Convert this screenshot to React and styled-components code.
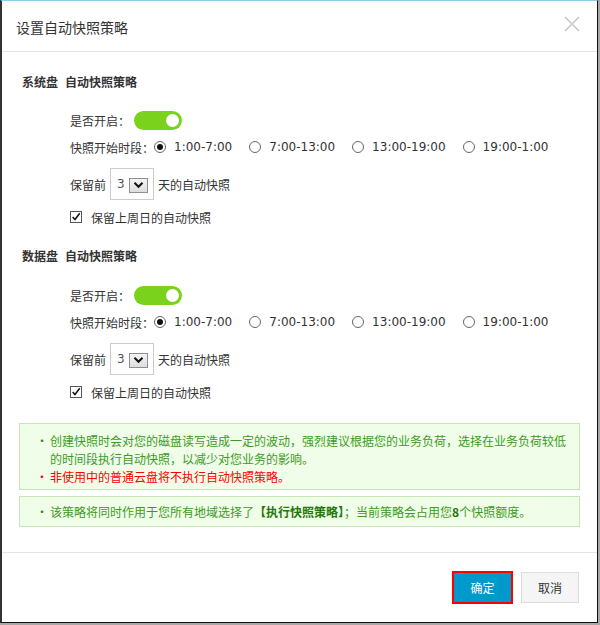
import React from 'react';
import styled, { createGlobalStyle } from 'styled-components';

const GlobalStyle = createGlobalStyle`
  html, body {
    margin: 0;
    padding: 0;
    background: #a8a8a8;
  }
  body {
    font-family: "DejaVu Sans", "Noto Sans CJK SC", sans-serif;
    font-size: 12px;
    color: #333;
  }
  * {
    box-sizing: border-box;
  }
`;

const Frame = styled.div`
  width: 598px;
  height: 623px;
  background: #fff;
  border-top: 1px solid #8ccbea;
  border-left: 2px solid #333;
  border-right: 1px solid #111;
  border-bottom: 1px solid #111;
  display: flex;
  flex-direction: column;
`;

const Header = styled.div`
  height: 51px;
  flex: 0 0 51px;
  display: flex;
  align-items: center;
  justify-content: space-between;
  padding: 0 17px 0 14px;
  border-bottom: 1px solid #e5e5e5;
`;

const Title = styled.div`
  font-family: "Noto Sans CJK SC", sans-serif;
  font-size: 14px;
  color: #333;
  margin-top: 1px;
`;

const Close = styled.div`
  width: 16px;
  height: 16px;
  margin-top: -4px;
  display: flex;
`;

const Body = styled.div`
  padding: 20px 17px 0 17px;
  display: flex;
  flex-direction: column;
`;

const SectionTitle = styled.div`
  height: 20px;
  line-height: 20px;
  padding-left: 3px;
  font-weight: bold;
  font-family: "Noto Sans CJK SC", sans-serif;
  margin-top: ${({ $first }) => ($first ? '0' : '19px')};
  span {
    margin-right: 7px;
  }
`;

const Form = styled.div`
  margin-left: 51px;
  display: flex;
  flex-direction: column;
`;

const Row = styled.div`
  display: flex;
  align-items: center;
  height: ${({ $h }) => $h || 20}px;
  margin-top: ${({ $mt }) => $mt}px;
`;

const Label = styled.span`
  font-family: "Noto Sans CJK SC", sans-serif;
  white-space: nowrap;
`;

const Toggle = styled.div`
  width: 48px;
  height: 19px;
  margin-left: 4px;
  border-radius: 10px;
  background: #7bd21c;
  display: flex;
  align-items: center;
  justify-content: flex-end;
  padding-right: 3px;
`;

const Knob = styled.div`
  width: 13px;
  height: 13px;
  border-radius: 50%;
  background: #fff;
`;

const RadioOption = styled.label`
  display: flex;
  align-items: center;
  margin-right: 17px;
`;

const RadioCircle = styled.span`
  width: 12px;
  height: 12px;
  border-radius: 50%;
  border: 1px solid #666;
  background: #fff;
  display: flex;
  align-items: center;
  justify-content: center;
  margin-right: 8px;
  &::after {
    content: '';
    width: 6px;
    height: 6px;
    border-radius: 50%;
    background: ${({ $checked }) => ($checked ? '#111' : 'transparent')};
  }
`;

const RadioText = styled.span`
  font-family: "DejaVu Sans", sans-serif;
  color: #333;
`;

const SelectBox = styled.div`
  width: 44px;
  height: 32px;
  margin: 0 4px;
  border: 1px solid #ccc;
  display: flex;
  align-items: center;
  padding-left: 6px;
  font-family: "DejaVu Sans", sans-serif;
  color: #555;
`;

const SelectArrow = styled.div`
  width: 19px;
  height: 15px;
  margin-left: 4px;
  margin-top: 2px;
  border: 1px solid #8f8f8f;
  background: linear-gradient(#f4f4f4, #dedede);
  display: flex;
  align-items: center;
  justify-content: center;
`;

const CheckBox = styled.span`
  width: 12px;
  height: 12px;
  border: 1px solid #555;
  background: #fff;
  margin-right: 9px;
  display: flex;
  align-items: center;
  justify-content: center;
`;

const Tip = styled.ul`
  list-style: none;
  margin: ${({ $mt }) => $mt}px 0 0 0;
  padding: ${({ $pad }) => $pad};
  padding-left: 16px;
  padding-right: 4px;
  border: 1px solid #c6e6b6;
  background: #f0fde9;
  font-family: "Noto Sans CJK SC", sans-serif;
`;

const TipItem = styled.li`
  display: flex;
  line-height: 18px;
  color: ${({ $red }) => ($red ? '#ff0000' : '#3d9b1f')};
  b {
    color: #23780a;
  }
`;

const Bullet = styled.span`
  flex: 0 0 14px;
  font-size: 12px;
  color: ${({ $red }) => ($red ? '#ff0000' : '#2f8a14')};
`;

const Footer = styled.div`
  margin-top: auto;
  border-top: 1px solid #e5e5e5;
  height: 70px;
  flex: 0 0 70px;
  display: flex;
  align-items: center;
  justify-content: flex-end;
  gap: 8px;
  padding: 0 18px 0 0;
`;

const Button = styled.button`
  font-family: "Noto Sans CJK SC", sans-serif;
  font-size: 12px;
  cursor: pointer;
  padding: 0;
  width: ${({ $primary }) => ($primary ? '61px' : '58px')};
  height: ${({ $primary }) => ($primary ? '33px' : '31px')};
  color: ${({ $primary }) => ($primary ? '#fff' : '#333')};
  background: ${({ $primary }) => ($primary ? '#0099cc' : '#f5f5f5')};
  border: ${({ $primary }) => ($primary ? '2px solid #ff0000' : '1px solid #dcdcdc')};
`;

const times = ['1:00-7:00', '7:00-13:00', '13:00-19:00', '19:00-1:00'];

const Chevron = () => (
  <svg width="11" height="8" viewBox="0 0 11 8">
    <path d="M1.5 1.8 L5.5 5.8 L9.5 1.8" fill="none" stroke="#111" strokeWidth="2" />
  </svg>
);

const Check = () => (
  <svg width="12" height="12" viewBox="0 0 12 12">
    <path d="M2 6 L4.8 9 L10.5 1.5" fill="none" stroke="#111" strokeWidth="1.8" />
  </svg>
);

const Policy = ({ name, first }) => (
  <>
    <SectionTitle $first={first}>
      <span>{name}</span>自动快照策略
    </SectionTitle>
    <Form>
      <Row $mt={first ? 18 : 19}>
        <Label>是否开启：</Label>
        <Toggle>
          <Knob />
        </Toggle>
      </Row>
      <Row $mt={7}>
        <Label>快照开始时段：</Label>
        {times.map((t, i) => (
          <RadioOption key={t}>
            <RadioCircle $checked={i === 0} />
            <RadioText>{t}</RadioText>
          </RadioOption>
        ))}
      </Row>
      <Row $mt={11} $h={32}>
        <Label>保留前</Label>
        <SelectBox>
          3
          <SelectArrow>
            <Chevron />
          </SelectArrow>
        </SelectBox>
        <Label>天的自动快照</Label>
      </Row>
      <Row $mt={7}>
        <CheckBox>
          <Check />
        </CheckBox>
        <Label>保留上周日的自动快照</Label>
      </Row>
    </Form>
  </>
);

export default function App() {
  return (
    <>
      <GlobalStyle />
      <Frame>
        <Header>
          <Title>设置自动快照策略</Title>
          <Close>
            <svg width="16" height="16" viewBox="0 0 16 16">
              <path d="M1 1 L15 15 M15 1 L1 15" stroke="#c8c8c8" strokeWidth="1.6" />
            </svg>
          </Close>
        </Header>
        <Body>
          <Policy name="系统盘" first />
          <Policy name="数据盘" />
          <Tip $mt={21} $pad="8px 0 3px">
            <TipItem>
              <Bullet>•</Bullet>
              <span>
                创建快照时会对您的磁盘读写造成一定的波动，强烈建议根据您的业务负荷，选择在业务负荷较低的时间段执行自动快照，以减少对您业务的影响。
              </span>
            </TipItem>
            <TipItem $red>
              <Bullet $red>•</Bullet>
              <span>非使用中的普通云盘将不执行自动快照策略。</span>
            </TipItem>
          </Tip>
          <Tip $mt={6} $pad="6px 0 5px">
            <TipItem>
              <Bullet>•</Bullet>
              <span>
                该策略将同时作用于您所有地域选择了<b>【执行快照策略】</b>；当前策略会占用您<b>8</b>个快照额度。
              </span>
            </TipItem>
          </Tip>
        </Body>
        <Footer>
          <Button $primary>确定</Button>
          <Button>取消</Button>
        </Footer>
      </Frame>
    </>
  );
}
